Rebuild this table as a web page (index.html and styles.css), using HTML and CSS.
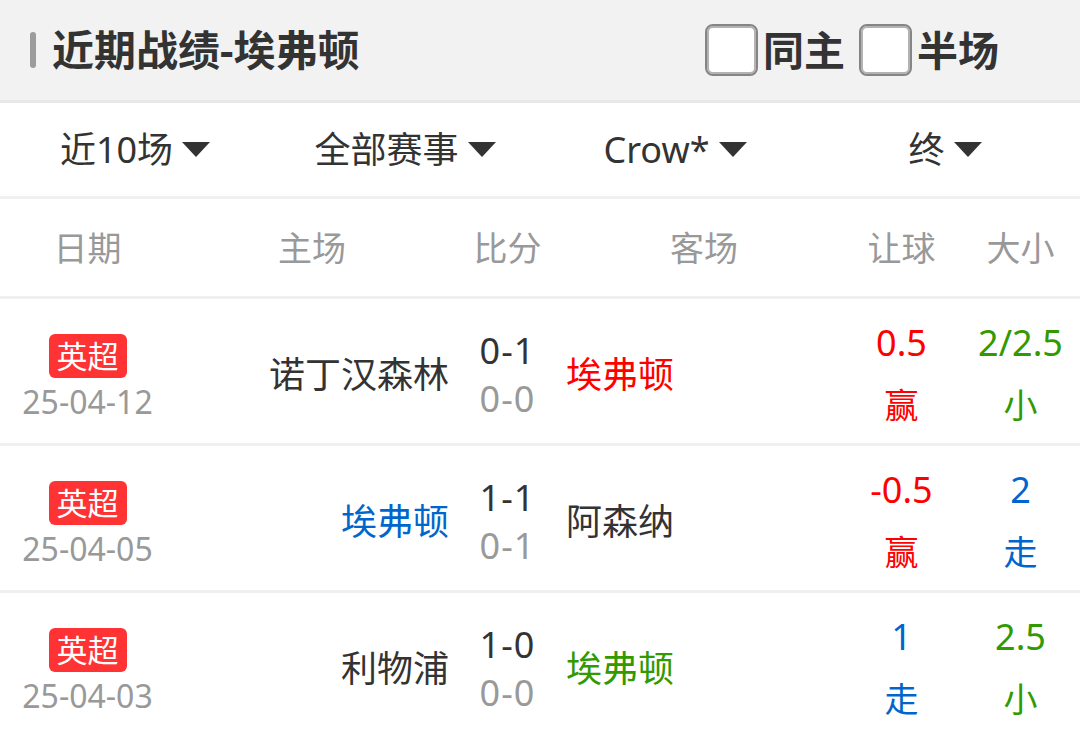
FILE: index.html
```html
<!DOCTYPE html>
<html lang="zh-CN">
<head>
<meta charset="utf-8">
<title>近期战绩-埃弗顿</title>
<link rel="stylesheet" href="styles.css">
</head>
<body>
<div class="page">
  <header class="top">
    <div class="title"><span class="bar"></span><h1>近期战绩-埃弗顿</h1></div>
    <div class="opts">
      <label class="opt"><span class="box"></span><span class="opt-text">同主</span></label>
      <label class="opt"><span class="box"></span><span class="opt-text">半场</span></label>
    </div>
  </header>

  <nav class="filters">
    <div class="filter"><span>近10场</span><i class="caret"></i></div>
    <div class="filter"><span>全部赛事</span><i class="caret"></i></div>
    <div class="filter"><span>Crow*</span><i class="caret"></i></div>
    <div class="filter"><span>终</span><i class="caret"></i></div>
  </nav>

  <div class="thead">
    <div>日期</div>
    <div>主场</div>
    <div>比分</div>
    <div>客场</div>
    <div>让球</div>
    <div>大小</div>
  </div>

  <div class="row">
    <div class="c-date"><span class="tag">英超</span><span class="date">25-04-12</span></div>
    <div class="c-home">诺丁汉森林</div>
    <div class="c-score"><span class="ft">0-1</span><span class="ht">0-0</span></div>
    <div class="c-away red">埃弗顿</div>
    <div class="c-odds red"><span class="v">0.5</span><span class="r">赢</span></div>
    <div class="c-odds green"><span class="v">2/2.5</span><span class="r">小</span></div>
  </div>

  <div class="row">
    <div class="c-date"><span class="tag">英超</span><span class="date">25-04-05</span></div>
    <div class="c-home blue">埃弗顿</div>
    <div class="c-score"><span class="ft">1-1</span><span class="ht">0-1</span></div>
    <div class="c-away">阿森纳</div>
    <div class="c-odds red"><span class="v">-0.5</span><span class="r">赢</span></div>
    <div class="c-odds blue"><span class="v">2</span><span class="r">走</span></div>
  </div>

  <div class="row">
    <div class="c-date"><span class="tag">英超</span><span class="date">25-04-03</span></div>
    <div class="c-home">利物浦</div>
    <div class="c-score"><span class="ft">1-0</span><span class="ht">0-0</span></div>
    <div class="c-away green">埃弗顿</div>
    <div class="c-odds blue"><span class="v">1</span><span class="r">走</span></div>
    <div class="c-odds green"><span class="v">2.5</span><span class="r">小</span></div>
  </div>
</div>
</body>
</html>
```

FILE: styles.css
```css
* { box-sizing: border-box; }

html, body {
  margin: 0;
  padding: 0;
  background: #ffffff;
}

body {
  font-family: "Noto Sans", "Noto Sans CJK SC", sans-serif;
  color: #333333;
  overflow: hidden;
}

.page {
  width: 1080px;
}

/* ---------- top header ---------- */
.top {
  height: 103px;
  background: #f2f2f2;
  border-bottom: 3px solid #e8e8e8;
  display: flex;
  align-items: center;
  justify-content: space-between;
  padding: 0 81px 0 30px;
}

.title {
  display: flex;
  align-items: center;
}

.bar {
  width: 6px;
  height: 36px;
  border-radius: 3px;
  background: #9c9c9c;
  margin-right: 16px;
}

.title h1 {
  margin: 0;
  font-size: 42px;
  font-weight: 700;
  line-height: 48px;
  color: #333333;
}

.opts {
  display: flex;
  align-items: center;
  gap: 14px;
}

.opt {
  display: flex;
  align-items: center;
  gap: 5px;
}

.box {
  width: 53px;
  height: 52px;
  border-radius: 8px;
  background: #ffffff;
  border: 2px solid #858585;
  box-shadow: inset 0 0 0 2px #b3b3b3;
}

.opt-text {
  font-size: 41px;
  font-weight: 700;
  line-height: 48px;
  color: #333333;
}

/* ---------- filters ---------- */
.filters {
  height: 96px;
  border-bottom: 3px solid #f0f0f0;
  display: grid;
  grid-template-columns: repeat(4, 1fr);
  align-items: center;
}

.filter {
  display: flex;
  justify-content: center;
  align-items: center;
  gap: 9px;
  font-size: 36px;
  line-height: 44px;
  color: #333333;
}

.caret {
  width: 0;
  height: 0;
  border-left: 14px solid transparent;
  border-right: 14px solid transparent;
  border-top: 15px solid #333333;
}

/* ---------- table ---------- */
.thead,
.row {
  display: grid;
  grid-template-columns: 175px 274px 117px 276px 119px 1fr;
  border-bottom: 3px solid #f0f0f0;
}

.thead {
  height: 100px;
  padding-top: 27px;
  font-size: 34px;
  line-height: 44px;
  color: #999999;
  text-align: center;
}

.row {
  height: 147px;
}

.c-date {
  display: flex;
  flex-direction: column;
  align-items: center;
  padding-top: 35px;
}

.tag {
  height: 44px;
  line-height: 44px;
  padding: 0 8px;
  border-radius: 6px;
  background: #ff3333;
  color: #ffffff;
  font-size: 31px;
}

.date {
  margin-top: 4px;
  font-size: 32px;
  line-height: 40px;
  color: #999999;
}

.c-home,
.c-away {
  padding-top: 54px;
  font-size: 36px;
  line-height: 44px;
}

.c-home { text-align: right; }
.c-away { text-align: left; }

.c-score {
  display: flex;
  flex-direction: column;
  align-items: center;
  padding-top: 28px;
  font-size: 36px;
  line-height: 48px;
  letter-spacing: 1px;
}

.ft { color: #333333; }
.ht { color: #999999; }

.c-odds {
  display: flex;
  flex-direction: column;
  align-items: center;
  padding-top: 13px;
  line-height: 62px;
}

.c-odds .v { font-size: 36px; }
.c-odds .r { font-size: 34px; }

.red { color: #ff0000; }
.green { color: #339900; }
.blue { color: #0066cc; }
```
